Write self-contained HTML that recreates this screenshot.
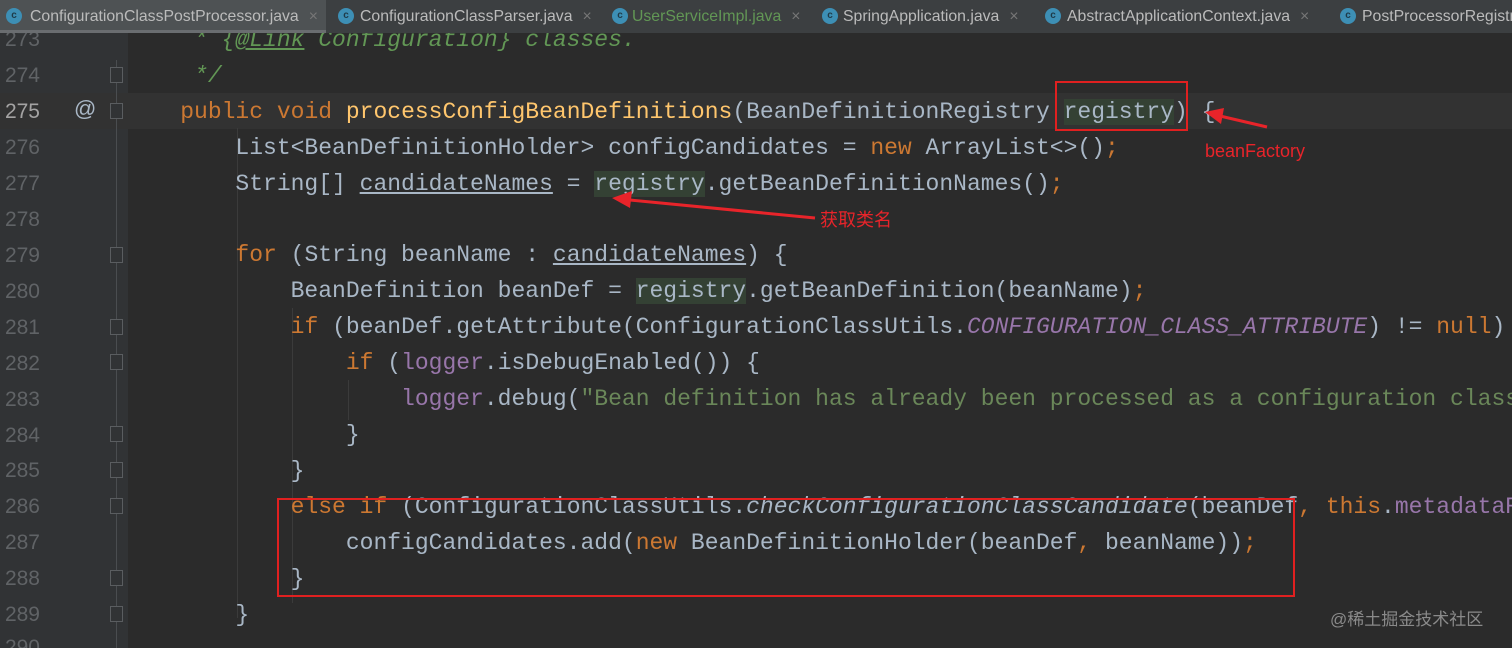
<!DOCTYPE html>
<html style="overflow:hidden;width:1512px;height:648px"><head><meta charset="utf-8"><style>
body{margin:0;width:1512px;height:648px;overflow:hidden;background:#2b2b2b;position:relative;font-family:"Liberation Mono",monospace}
.tabs{position:absolute;left:0;top:0;width:1512px;height:33px;background:#3c3f41;z-index:5;font-family:"Liberation Sans",sans-serif;font-size:15.8px;color:#bbbbbb;overflow:hidden}
.tab{position:absolute;top:0;height:33px;line-height:33px;white-space:nowrap}
.ic{position:absolute;top:8px;width:16px;height:16px;border-radius:50%;background:#3d8fb5;color:#1e3a48;font-size:10px;line-height:16px;text-align:center;font-weight:bold}
.x{color:#777;margin-left:10px}
.gut{position:absolute;left:0;top:0;width:128px;height:648px;background:#313335}
.cur{position:absolute;left:0;top:93px;width:1512px;height:36px;background:#323232}
.ln{position:absolute;left:0;width:40px;text-align:right;font-size:21px;color:#606366;font-family:"Liberation Sans",sans-serif}
.wrap{position:absolute;left:125px;top:0;width:1387px;height:648px;overflow:hidden}
.code{position:absolute;left:0;top:23px;margin:0;font-size:23px;line-height:35.9px;color:#a9b7c6;white-space:pre}
.k{color:#cc7832}.m{color:#ffc66d}.c{color:#629755;font-style:italic}.p{color:#9876aa}.s{color:#6a8759}.i{color:#9876aa;font-style:italic}
.h{background:#344134}.u{text-decoration:underline}
.guide{position:absolute;width:1px;background:#3b3b3b}
.fold{position:absolute;left:110px;width:13px;height:16px;border:1px solid #5a5d60;box-sizing:border-box;background:#313335}
.box{position:absolute;border:2px solid #e02020}
.red{position:absolute;color:#e8242a;font-family:"Liberation Sans","Noto Sans CJK SC",sans-serif;font-size:18px}
</style></head><body>
<div class="gut"></div>
<div class="cur"></div>
<div style="position:absolute;left:116px;top:60px;width:1px;height:588px;background:#4a4d50"></div>
<div class="guide" style="left:237px;top:128px;height:490px"></div>
<div class="guide" style="left:292px;top:308px;height:295px"></div>
<div class="guide" style="left:348px;top:380px;height:40px"></div>
<div class="fold" style="top:67px"></div><div class="fold" style="top:103px"></div>
<div class="fold" style="top:247px"></div><div class="fold" style="top:319px"></div><div class="fold" style="top:354px"></div>
<div class="fold" style="top:426px"></div><div class="fold" style="top:462px"></div><div class="fold" style="top:498px"></div>
<div class="fold" style="top:570px"></div><div class="fold" style="top:606px"></div>
<div class="ln" style="top:28px">273</div><div class="ln" style="top:64px">274</div><div class="ln" style="top:100px;color:#a4a3a3">275</div>
<div class="ln" style="top:136px">276</div><div class="ln" style="top:172px">277</div><div class="ln" style="top:208px">278</div>
<div class="ln" style="top:244px">279</div><div class="ln" style="top:280px">280</div><div class="ln" style="top:316px">281</div>
<div class="ln" style="top:352px">282</div><div class="ln" style="top:388px">283</div><div class="ln" style="top:424px">284</div>
<div class="ln" style="top:459px">285</div><div class="ln" style="top:495px">286</div><div class="ln" style="top:531px">287</div>
<div class="ln" style="top:567px">288</div><div class="ln" style="top:603px">289</div><div class="ln" style="top:636px">290</div>
<div style="position:absolute;left:74px;top:96px;color:#a9b7c6;font-size:22px;font-family:'Liberation Sans',sans-serif">@</div>
<div class="wrap"><pre class="code"><span class="c">     * {<span class="u">@Link</span> Configuration} classes.</span>
<span class="c">     */</span>
    <span class="k">public void </span><span class="m">processConfigBeanDefinitions</span>(BeanDefinitionRegistry <span class="h">registry</span>) {
        List&lt;BeanDefinitionHolder&gt; configCandidates = <span class="k">new </span>ArrayList&lt;&gt;()<span class="k">;</span>
        String[] <span class="u">candidateNames</span> = <span class="h">registry</span>.getBeanDefinitionNames()<span class="k">;</span>

        <span class="k">for </span>(String beanName : <span class="u">candidateNames</span>) {
            BeanDefinition beanDef = <span class="h">registry</span>.getBeanDefinition(beanName)<span class="k">;</span>
            <span class="k">if </span>(beanDef.getAttribute(ConfigurationClassUtils.<span class="i">CONFIGURATION_CLASS_ATTRIBUTE</span>) != <span class="k">null</span>) {
                <span class="k">if </span>(<span class="p">logger</span>.isDebugEnabled()) {
                    <span class="p">logger</span>.debug(<span class="s">"Bean definition has already been processed as a configuration class: "</span>
                }
            }
            <span class="k">else if </span>(ConfigurationClassUtils.<span style="font-style:italic">checkConfigurationClassCandidate</span>(beanDef<span class="k">, this</span>.<span class="p">metadataReaderFactory</span>
                configCandidates.add(<span class="k">new </span>BeanDefinitionHolder(beanDef<span class="k">, </span>beanName))<span class="k">;</span>
            }
        }</pre></div>
<div class="box" style="left:1055px;top:81px;width:129px;height:46px"></div>
<div class="box" style="left:277px;top:498px;width:1014px;height:95px"></div>
<svg style="position:absolute;left:0;top:0" width="1512" height="648">
<line x1="1267" y1="127" x2="1220" y2="116" stroke="#e8242a" stroke-width="3"/>
<polygon points="1205,112 1224,108 1221,124" fill="#e8242a"/>
<line x1="815" y1="218" x2="630" y2="200" stroke="#e8242a" stroke-width="3"/>
<polygon points="612,198 632,191 630,208" fill="#e8242a"/>
</svg>
<div class="red" style="left:1205px;top:141px">beanFactory</div>
<div class="red" style="left:820px;top:206px">获取类名</div>
<div style="position:absolute;left:1330px;top:605px;color:#8a8a8a;font-size:17px;font-family:'Liberation Sans','Noto Sans CJK SC',sans-serif">@稀土掘金技术社区</div>
<div class="tabs">
<div style="position:absolute;left:0;top:0;width:326px;height:33px;background:#4e5254"></div>
<div style="position:absolute;left:0;top:30px;width:326px;height:3px;background:#6a6d70"></div>
<div class="tab" style="left:6px"><span class="ic" style="left:0">c</span><span style="margin-left:24px">ConfigurationClassPostProcessor.java</span><span class="x">×</span></div>
<div class="tab" style="left:338px"><span class="ic" style="left:0">c</span><span style="margin-left:22px">ConfigurationClassParser.java</span><span class="x">×</span></div>
<div class="tab" style="left:612px;color:#629755"><span class="ic" style="left:0">c</span><span style="margin-left:20px">UserServiceImpl.java</span><span class="x">×</span></div>
<div class="tab" style="left:822px"><span class="ic" style="left:0">c</span><span style="margin-left:21px">SpringApplication.java</span><span class="x">×</span></div>
<div class="tab" style="left:1045px"><span class="ic" style="left:0">c</span><span style="margin-left:22px">AbstractApplicationContext.java</span><span class="x">×</span></div>
<div class="tab" style="left:1340px"><span class="ic" style="left:0">c</span><span style="margin-left:22px">PostProcessorRegistrationDelegate.java</span></div>
</div>
</body></html>
